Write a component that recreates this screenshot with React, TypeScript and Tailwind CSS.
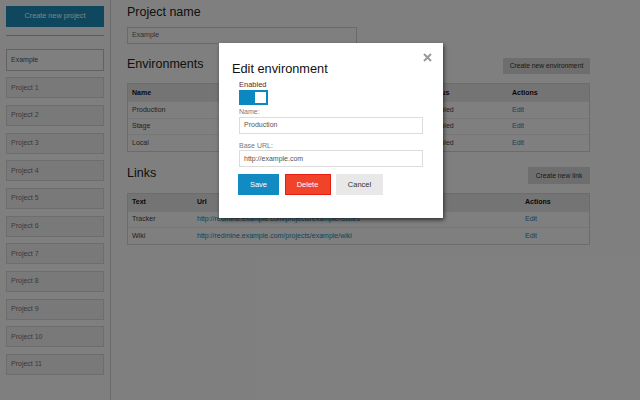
import React from "react";

const projects = [
  "Project 1",
  "Project 2",
  "Project 3",
  "Project 4",
  "Project 5",
  "Project 6",
  "Project 7",
  "Project 8",
  "Project 9",
  "Project 10",
  "Project 11",
];

const envRows = [
  { name: "Production", status: "Enabled" },
  { name: "Stage", status: "Enabled" },
  { name: "Local", status: "Enabled" },
];

const linkRows = [
  { text: "Tracker", url: "http://redmine.example.com/projects/example/issues" },
  { text: "Wiki", url: "http://redmine.example.com/projects/example/wiki" },
];

export default function App() {
  return (
    <div
      className="relative flex h-[400px] w-[640px] overflow-hidden bg-white text-[#333]"
      style={{ fontFamily: '"Liberation Sans", Arial, sans-serif' }}
    >
      {/* Sidebar */}
      <aside className="flex h-full w-[111px] shrink-0 flex-col border-r border-[#d4d4d4] px-[6px] pt-[6px]">
        <button className="h-[21px] w-full bg-[#1f8fbf] text-[7.25px] text-white">
          Create new project
        </button>
        <div className="mt-[8px] h-px w-full bg-[#b8b8b8]" />
        <div className="mt-[13.3px] flex flex-col gap-[6.7px]">
          <div className="flex h-[21.3px] items-center border border-[#c4c4c4] bg-white pl-[4px] text-[7px] text-[#555]">
            Example
          </div>
          {projects.map((p) => (
            <div
              key={p}
              className="flex h-[21px] items-center border border-[#dadada] bg-[#f2f2f2] pl-[4px] text-[7px] text-[#777]"
            >
              {p}
            </div>
          ))}
        </div>
      </aside>

      {/* Main */}
      <main className="flex min-w-0 flex-1 flex-col pl-[16px] pr-[50px] pt-[5px]">
        <h1 className="text-[12.5px] font-normal leading-[15px] text-[#222]">Project name</h1>
        <div className="mt-[7px] flex h-[16.6px] w-[230px] items-center border border-[#d4d4d4] bg-white pl-[4px] text-[7px] text-[#666]">
          Example
        </div>

        <div className="mt-[13.4px] flex items-start justify-between">
          <h2 className="text-[12.5px] font-normal leading-[15px] text-[#222]">Environments</h2>
          <button className="mt-[1.3px] h-[16px] w-[87px] bg-[#dcdcdc] text-[6.75px] text-[#333]">
            Create new environment
          </button>
        </div>

        <div className="mt-[9px] border border-[#d8d8d8] text-[7px]">
          <div className="grid h-[17px] grid-cols-[100px_196px_84px_1fr] items-center bg-[#e9e9e9] font-bold text-[#111]">
            <div className="pl-[4px]">Name</div>
            <div className="pl-[4px]"></div>
            <div className="pl-[4px]">Status</div>
            <div className="pl-[4px]">Actions</div>
          </div>
          {envRows.map((r) => (
            <div
              key={r.name}
              className="grid h-[16.5px] grid-cols-[100px_196px_84px_1fr] items-center border-t border-[#ececec] text-[#444]"
            >
              <div className="pl-[4px]">{r.name}</div>
              <div className="pl-[4px]"></div>
              <div className="pl-[4px]">{r.status}</div>
              <div className="pl-[4px] text-[#2b86b3]">Edit</div>
            </div>
          ))}
        </div>

        <div className="mt-[14.4px] flex items-start justify-between">
          <h2 className="text-[12.5px] font-normal leading-[15px] text-[#222]">Links</h2>
          <button className="mt-[1.3px] h-[16.6px] w-[62px] bg-[#dcdcdc] text-[6.75px] text-[#333]">
            Create new link
          </button>
        </div>

        <div className="mt-[9px] border border-[#d8d8d8] text-[7px]">
          <div className="grid h-[16.7px] grid-cols-[65px_328px_1fr] items-center bg-[#e9e9e9] font-bold text-[#111]">
            <div className="pl-[4px]">Text</div>
            <div className="pl-[4px]">Url</div>
            <div className="pl-[4px]">Actions</div>
          </div>
          {linkRows.map((r) => (
            <div
              key={r.text}
              className="grid h-[16.6px] grid-cols-[65px_328px_1fr] items-center border-t border-[#ececec] text-[#444]"
            >
              <div className="pl-[4px]">{r.text}</div>
              <div className="pl-[4px] text-[#2b86b3]">{r.url}</div>
              <div className="pl-[4px] text-[#2b86b3]">Edit</div>
            </div>
          ))}
        </div>
      </main>

      {/* Backdrop */}
      <div className="absolute inset-0 bg-black/50" />

      {/* Modal */}
      <div className="absolute left-[219px] top-[43px] flex h-[175px] w-[224px] flex-col bg-white pt-[17.5px] shadow-[1px_2px_4px_rgba(0,0,0,0.6)]">
        <button className="absolute left-[204px] top-[10px] flex h-[9px] w-[9px] items-center justify-center" aria-label="Close">
          <svg width="9" height="9" viewBox="0 0 9 9">
            <path d="M1 1 L8 8 M8 1 L1 8" stroke="#9a9a9a" strokeWidth="2" strokeLinecap="butt" />
          </svg>
        </button>
        <h3 className="pl-[13px] text-[12.75px] font-normal leading-[15px] text-[#111]">Edit environment</h3>
        <div className="flex flex-col px-[20px]">
          <label className="mt-[4.7px] text-[7.5px] leading-[9px] text-[#5e1d2c]">Enabled</label>
          <div className="relative mt-[0.7px] h-[15px] w-[29px] bg-[#0b88c0]">
            <div className="absolute right-[2px] top-[2px] h-[11px] w-[11px] bg-white" />
          </div>
          <label className="mt-[2px] text-[7px] leading-[9px] text-[#777]">Name:</label>
          <div className="mt-[1.3px] flex h-[16.6px] w-full items-center border border-[#dcdcdc] bg-white pl-[4px] text-[7px] text-[#555]">
            Production
          </div>
          <label className="mt-[7.3px] text-[7px] leading-[9px] text-[#777]">Base URL:</label>
          <div className="mt-[0.4px] flex h-[16.6px] w-full items-center border border-[#dcdcdc] bg-white pl-[4px] text-[7px] text-[#555]">
            http://example.com
          </div>
          <div className="mt-[7px] flex gap-[5.5px]">
            <button className="-ml-[1px] h-[21.4px] w-[41px] bg-[#118bc2] text-[7.5px] text-white">Save</button>
            <button className="h-[21.4px] w-[46px] border border-[#e51d12] bg-[#f1432a] text-[7.5px] text-white">
              Delete
            </button>
            <button className="h-[21.4px] w-[47px] bg-[#e8e8e8] text-[7.5px] text-[#333]">Cancel</button>
          </div>
        </div>
      </div>
    </div>
  );
}
